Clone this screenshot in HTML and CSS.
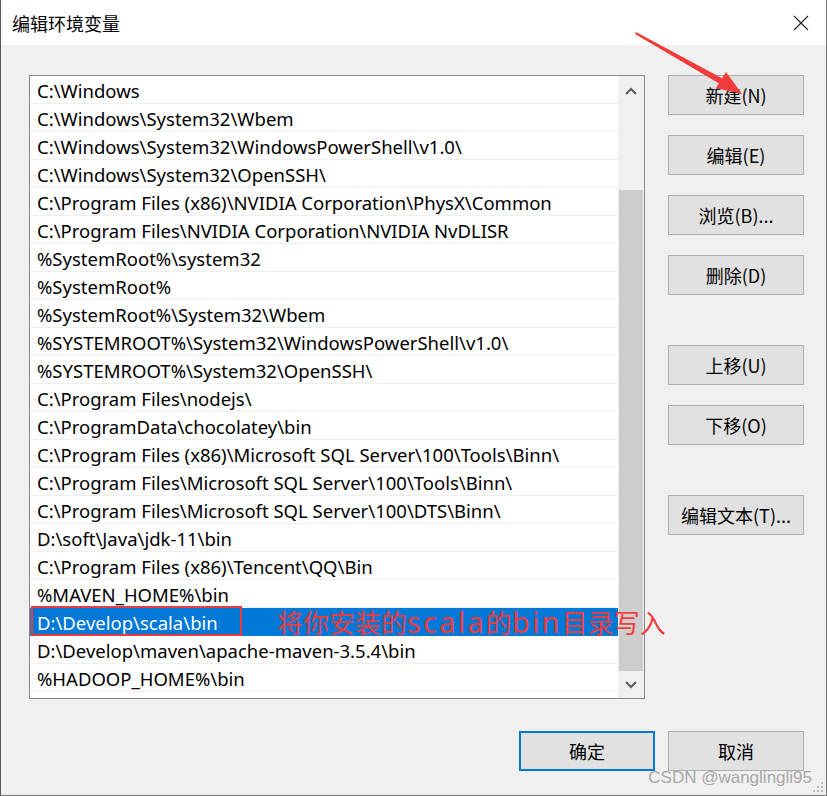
FILE: index.html
```html
<!DOCTYPE html>
<html lang="zh">
<head>
<meta charset="utf-8">
<title>编辑环境变量</title>
<link rel="stylesheet" href="styles.css">
</head>
<body>
<div class="window">
  <div class="titlebar">
    <span class="title">编辑环境变量</span>
    <svg class="close" width="16" height="16" viewBox="0 0 16 16"><path d="M1 1 L15 15 M15 1 L1 15" stroke="#222" stroke-width="1.2" fill="none"/></svg>
  </div>
  <div class="content">
    <div class="main">
      <div class="listbox">
        <div class="rows">
          <div class="row">C:\Windows</div>
          <div class="row">C:\Windows\System32\Wbem</div>
          <div class="row">C:\Windows\System32\WindowsPowerShell\v1.0\</div>
          <div class="row">C:\Windows\System32\OpenSSH\</div>
          <div class="row">C:\Program Files (x86)\NVIDIA Corporation\PhysX\Common</div>
          <div class="row">C:\Program Files\NVIDIA Corporation\NVIDIA NvDLISR</div>
          <div class="row">%SystemRoot%\system32</div>
          <div class="row">%SystemRoot%</div>
          <div class="row">%SystemRoot%\System32\Wbem</div>
          <div class="row">%SYSTEMROOT%\System32\WindowsPowerShell\v1.0\</div>
          <div class="row">%SYSTEMROOT%\System32\OpenSSH\</div>
          <div class="row">C:\Program Files\nodejs\</div>
          <div class="row">C:\ProgramData\chocolatey\bin</div>
          <div class="row">C:\Program Files (x86)\Microsoft SQL Server\100\Tools\Binn\</div>
          <div class="row">C:\Program Files\Microsoft SQL Server\100\Tools\Binn\</div>
          <div class="row">C:\Program Files\Microsoft SQL Server\100\DTS\Binn\</div>
          <div class="row">D:\soft\Java\jdk-11\bin</div>
          <div class="row">C:\Program Files (x86)\Tencent\QQ\Bin</div>
          <div class="row">%MAVEN_HOME%\bin</div>
          <div class="row selected">D:\Develop\scala\bin</div>
          <div class="row">D:\Develop\maven\apache-maven-3.5.4\bin</div>
          <div class="row">%HADOOP_HOME%\bin</div>
        </div>
        <div class="scrollbar">
          <div class="sb-btn sb-up"><svg width="12" height="8" viewBox="0 0 12 8"><path d="M1 7 L6 2 L11 7" stroke="#606060" stroke-width="2.2" fill="none"/></svg></div>
          <div class="sb-space"></div>
          <div class="sb-thumb"></div>
          <div class="sb-btn sb-down"><svg width="12" height="8" viewBox="0 0 12 8"><path d="M1 1 L6 6 L11 1" stroke="#606060" stroke-width="2.2" fill="none"/></svg></div>
        </div>
      </div>
      <div class="side">
        <button class="btn">新建(N)</button>
        <button class="btn">编辑(E)</button>
        <button class="btn">浏览(B)...</button>
        <button class="btn">删除(D)</button>
        <button class="btn gap">上移(U)</button>
        <button class="btn">下移(O)</button>
        <button class="btn gap2">编辑文本(T)...</button>
      </div>
    </div>
    <div class="footer">
      <button class="btn default">确定</button>
      <button class="btn">取消</button>
    </div>
  </div>

  <div class="mark-box"></div>
  <div class="mark-text">将你安装的<span class="lat">scala</span>的<span class="lat">bin</span>目录写入</div>
  <svg class="arrow" width="827" height="120" viewBox="0 0 827 120">
    <polygon points="636,32 722.5,78.5 720,84 635,34" fill="#f23b3b"/>
    <polygon points="742,94 716,88 726,72" fill="#f23b3b"/>
  </svg>
  <div class="watermark">CSDN @wanglingli95</div>
  <svg class="grip" width="12" height="12" viewBox="0 0 12 12">
    <g fill="#b8b8b8">
      <rect x="9" y="1" width="2" height="2"/>
      <rect x="5" y="5" width="2" height="2"/><rect x="9" y="5" width="2" height="2"/>
      <rect x="1" y="9" width="2" height="2"/><rect x="5" y="9" width="2" height="2"/><rect x="9" y="9" width="2" height="2"/>
    </g>
  </svg>
</div>
</body>
</html>
```
FILE: styles.css
```css
html, body {
  margin: 0;
  padding: 0;
}
body {
  width: 827px;
  height: 796px;
  overflow: hidden;
  background: #f0f0f0;
  font-family: "Noto Sans CJK SC", "Noto Sans", sans-serif;
}
.window {
  position: relative;
  width: 827px;
  height: 796px;
  box-sizing: border-box;
  border-left: 1px solid #5a5a5a;
  border-right: 1px solid #7a7a7a;
  border-bottom: 1px solid #7a7a7a;
  background: #f0f0f0;
}
.titlebar {
  height: 45px;
  background: #fff;
  display: flex;
  align-items: center;
  justify-content: space-between;
  padding: 0 17px 0 11px;
}
.title {
  font-size: 18px;
  color: #000;
  line-height: 1;
}
.close {
  display: block;
}
.content {
  padding: 30px 0 0 28px;
}
.main {
  display: flex;
}
.listbox {
  width: 616px;
  height: 624px;
  box-sizing: border-box;
  border: 1px solid #828790;
  background: #fff;
  display: flex;
}
.rows {
  flex: 1;
  min-width: 0;
  overflow: hidden;
}
.row {
  height: 28px;
  box-sizing: border-box;
  border-bottom: 1px solid #efefef;
  padding-left: 7px;
  font-family: "Noto Sans", "Noto Sans CJK SC", sans-serif;
  font-size: 18.5px;
  line-height: 29px;
  color: #000;
  white-space: nowrap;
  overflow: hidden;
}
.row.selected {
  background: #0078d7;
  color: #fff;
  border-bottom-color: #0078d7;
}
.scrollbar {
  width: 26px;
  background: #f0f0f0;
  display: flex;
  flex-direction: column;
}
.sb-btn {
  display: flex;
  align-items: center;
  justify-content: center;
}
.sb-up {
  height: 30px;
}
.sb-space {
  height: 84px;
}
.sb-thumb {
  height: 481px;
  margin: 0 1px;
  background: #cdcdcd;
}
.sb-down {
  flex: 1;
}
.side {
  margin-left: 23px;
  display: flex;
  flex-direction: column;
  gap: 20px;
}
.btn {
  width: 136px;
  height: 40px;
  box-sizing: border-box;
  border: 1px solid #adadad;
  background: #e1e1e1;
  font-family: "Noto Sans CJK SC", "Noto Sans", sans-serif;
  font-size: 18px;
  color: #000;
  padding: 0;
}
.btn.gap {
  margin-top: 30px;
}
.btn.gap2 {
  margin-top: 30px;
}
.btn.default {
  border: 2px solid #0078d7;
}
.footer {
  display: flex;
  justify-content: flex-end;
  gap: 13px;
  padding: 32px 22px 0 0;
}
.mark-box {
  position: absolute;
  left: 30px;
  top: 606px;
  width: 211px;
  height: 30px;
  box-sizing: border-box;
  border: 2px solid #ec3b3b;
}
.mark-text {
  position: absolute;
  left: 276px;
  top: 604px;
  font-size: 26px;
  line-height: 36px;
  color: #f23b3b;
  white-space: nowrap;
  font-family: "Noto Sans CJK SC", "Noto Sans", sans-serif;
}
.mark-text .lat {
  font-family: "Noto Sans", sans-serif;
  font-size: 29px;
  letter-spacing: 2.2px;
  line-height: 0;
}
.arrow {
  position: absolute;
  left: -1px;
  top: 0;
}
.watermark {
  position: absolute;
  right: 14px;
  bottom: 7px;
  font-family: "Liberation Sans", "Noto Sans", sans-serif;
  font-size: 17px;
  color: #a8a8a8;
}
.grip {
  position: absolute;
  right: 2px;
  bottom: 2px;
}
```
